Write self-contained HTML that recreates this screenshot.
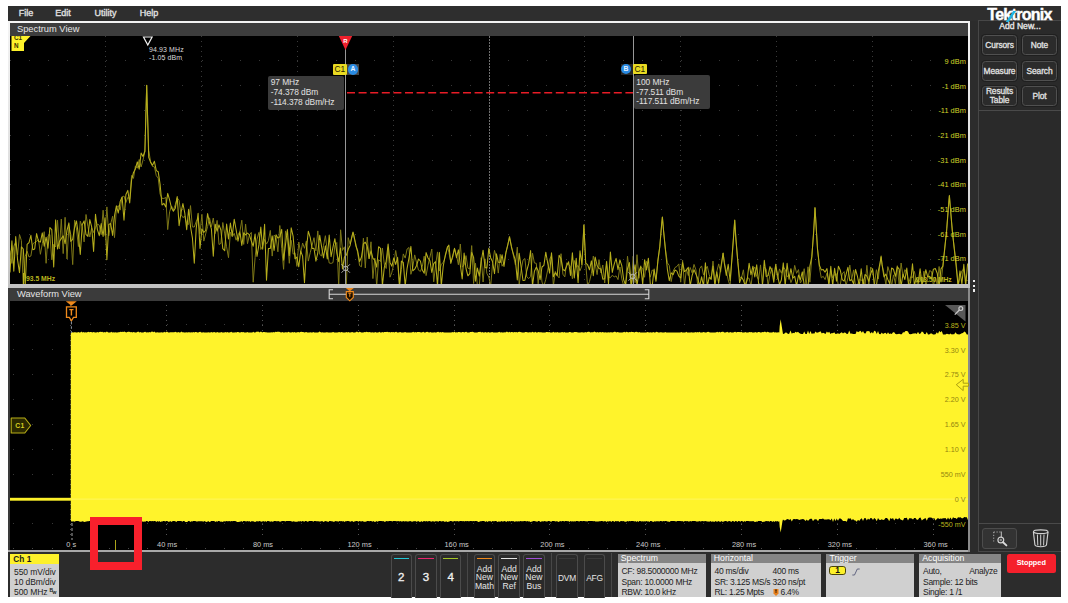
<!DOCTYPE html>
<html lang="en">
<head>
<meta charset="utf-8">
<title>Tektronix Spectrum View</title>
<style>
*{box-sizing:border-box;margin:0;padding:0}
html,body{width:1068px;height:603px;overflow:hidden;background:#fff}
body{font-family:"Liberation Sans",Arial,sans-serif;color:#eee;position:relative}
div,svg,b,i{position:absolute}
#app{left:8px;top:6px;width:1053px;height:591px;background:#2c2c2c;position:absolute}
/* coordinates inside #app are relative to (8,6) – we use a wrapper with offset to keep page coords */
#pg{left:-8px;top:-6px;width:1068px;height:603px}
#menubar{left:8px;top:6px;width:1053px;height:15px;background:#2e2e2e}
.menu{top:7.8px;width:40px;text-align:center;font-size:9px;font-weight:normal;-webkit-text-stroke:.35px #e0e0e0;color:#e0e0e0;letter-spacing:0;line-height:11px}
/* spectrum view */
#specframe{left:8px;top:21px;width:962.4px;height:266.5px;background:linear-gradient(#f4f4f4,#dcdcdc 60%,#c2c2c2)}
#spectitle{left:10px;top:22.5px;width:958.2px;height:13.5px;background:#3d3d3d}
.vtitle{font-size:9.3px;color:#e6e6e6;line-height:13px;left:7px;top:0;white-space:nowrap}
#specplot{left:10.3px;top:36px;width:957.9px;height:248px;background:#000;overflow:hidden}
/* waveform view */
#waveframe{left:8px;top:287.5px;width:962.4px;height:264.5px;background:#3a3a3a}
#wavetitle{left:8px;top:287.5px;width:962.4px;height:13.5px;background:#3b3b3b}
#waveplot{left:10.3px;top:301px;width:957.9px;height:250px;background:#000;overflow:hidden}
#wavebottom{left:8px;top:550.3px;width:962.4px;height:1.5px;background:#a9a9a9}
svg{left:0;top:0;overflow:visible}
/* side */
#sidepanel{left:978px;top:20px;width:83px;height:532px;background:#2a2a2a;border:1px solid #474747;border-right:0}
#logo{left:987.3px;top:5.7px;width:70px;height:18px;font-size:16px;font-weight:bold;color:#fff;letter-spacing:-.72px;line-height:18px;white-space:nowrap;z-index:3;-webkit-text-stroke:.45px #fff}
#logo span{position:static}
#logo .k{position:relative;display:inline-block}
#logo .k i{left:2.9px;top:5.4px;width:2.7px;height:10.6px;background:#1fb4e2;transform:skewX(-34deg);transform-origin:0 100%;display:block}
#addnew{left:979px;top:21px;width:82px;text-align:center;font-size:8.6px;font-weight:normal;-webkit-text-stroke:.35px #e6e6e6;color:#e6e6e6;line-height:11px;z-index:3}
.sbtn{width:35px;height:20px;border:1px solid #505050;border-radius:3.5px;background:#2b2b2b;color:#e2e2e2;font-size:8.4px;font-weight:normal;-webkit-text-stroke:.3px #e2e2e2;text-align:center;line-height:18px;letter-spacing:-.1px;white-space:nowrap;box-shadow:0 0 0 1px #1f1f1f}
.sbtn.two{line-height:8.4px;padding-top:.3px}
.hsep{height:1px;background:#4a4a4a}
#zoombtn{left:982px;top:528px;width:35px;height:20.5px;border:1px solid #4c4c4c;border-radius:3px;background:#333}
#trash{left:1032px;top:528.8px;width:18px;height:19px}
#handle{left:973px;top:279.8px;width:3px;height:14px}
#handle i{display:block;position:static;width:2.4px;height:2.4px;background:#ececec;margin:0 0 2.4px 0}
/* bottom */
.badge{top:553.5px;height:43.5px;background:#d0d0d0;color:#1c1c1c;overflow:hidden}
.badge .bh{left:0;top:0;right:0;height:9.5px;background:#858585;color:#fff;font-size:8.7px;line-height:8.6px;padding-left:3.3px;white-space:nowrap}
.badge .bt{left:4px;font-size:8.5px;line-height:10px;white-space:nowrap;letter-spacing:-.27px}
.cbtn{top:553.5px;width:21.5px;height:44px;border:1px solid #4b4b4b;border-bottom:0;border-radius:3px 3px 0 0;background:#2a2a2a}
.cbtn b{left:2px;right:2px;top:3.6px;height:1.2px;display:block}
.cbtn span{position:absolute}
.cbtn .num{left:0;right:0;top:15.5px;text-align:center;font-size:11.5px;line-height:14px;color:#f0f0f0;-webkit-text-stroke:.35px #f0f0f0}
.cbtn .t3{left:-3px;right:-3px;top:10.2px;text-align:center;font-size:8.6px;line-height:8.8px;color:#e6e6e6}
.cbtn .t1{left:-3px;right:-3px;top:18px;text-align:center;font-size:8.4px;line-height:10px;color:#e6e6e6;letter-spacing:-.2px}
.vsep{top:553px;width:1px;height:44px;background:#474747}
.pill{left:3.3px;top:12.8px;width:16.4px;height:9.2px;border-radius:2.8px;background:#fdf12a;border:.9px solid #4a4508;font-size:8.4px;line-height:7.6px;text-align:center;color:#111;font-weight:bold}
#stopped{left:1007px;top:553.8px;width:48.5px;height:19.3px;background:#f5202c;border-radius:2.5px;color:#fff;font-size:7.3px;font-weight:bold;text-align:center;line-height:17.6px}
/* overlay */
.tagt{font-size:6.3px;font-weight:bold;color:#3a3200;line-height:8px}
.pk{font-size:7px;color:#d8d8d8;line-height:8px;white-space:nowrap;letter-spacing:.1px}
.curline{width:1.3px;background:#989898}
#rlab{left:342px;top:37.5px;width:7px;text-align:center;font-size:6px;font-weight:bold;color:#fff;line-height:7px}
.c1tag{width:14px;height:10.8px;background:#e9da22;color:#262200;font-size:8.4px;line-height:10.5px;text-align:center;border-radius:1px}
.abbg{width:12px;height:10.8px;background:#454545}
.ab{width:10.4px;height:10.4px;border-radius:50%;background:#2a8be2;color:#e8f2ff;font-size:6.8px;font-weight:bold;text-align:center;line-height:10.5px}
.rd{height:34px;background:#3b3b3b;border-radius:2px;color:#e2e2e2;font-size:8.4px;line-height:9.9px;padding:2.6px 0 0 2.5px;white-space:nowrap;letter-spacing:-.05px}
.rd span{position:static;display:block}
.ylab{left:900px;width:65.8px;text-align:right;font-size:7.4px;line-height:9px;color:#d4d42a;white-space:nowrap}
.flab{font-size:6.8px;font-weight:bold;color:#b9b41e;line-height:8px;white-space:nowrap}
#c1m{left:13px;top:421px;width:14px;text-align:center;font-size:6.8px;font-weight:bold;color:#d9d022;line-height:9px;letter-spacing:.5px}
.vlab{left:900px;width:65.5px;text-align:right;font-size:7.2px;line-height:9px;color:#93850f;white-space:nowrap}
.tlab{top:540px;width:20px;text-align:center;font-size:7.4px;line-height:9px;color:#c9c9c9;white-space:nowrap}
#redbox{left:89.5px;top:517px;width:52.5px;height:53px;border:8px solid #f8202c}
</style>
</head>
<body>
<div id="app"><div id="pg">

<div id="menubar"></div>
<div class="menu" style="left:6.1px">File</div>
<div class="menu" style="left:42.9px">Edit</div>
<div class="menu" style="left:85.4px">Utility</div>
<div class="menu" style="left:129.1px">Help</div>

<!-- ================= Spectrum View ================= -->
<div id="specframe"></div>
<div id="spectitle"><div class="vtitle">Spectrum View</div></div>
<div id="specplot">
<svg width="958" height="248" viewBox="0 0 958 248">
<g shape-rendering="crispEdges">
<line x1="0" x2="925.0" y1="24.8" y2="24.8" stroke="#383838" stroke-width="1" stroke-dasharray="1 18.160"/>
<line x1="0" x2="925.0" y1="49.6" y2="49.6" stroke="#383838" stroke-width="1" stroke-dasharray="1 18.160"/>
<line x1="0" x2="925.0" y1="74.4" y2="74.4" stroke="#383838" stroke-width="1" stroke-dasharray="1 18.160"/>
<line x1="0" x2="925.0" y1="99.2" y2="99.2" stroke="#383838" stroke-width="1" stroke-dasharray="1 18.160"/>
<line x1="0" x2="925.0" y1="124.0" y2="124.0" stroke="#383838" stroke-width="1" stroke-dasharray="1 18.160"/>
<line x1="0" x2="925.0" y1="148.8" y2="148.8" stroke="#383838" stroke-width="1" stroke-dasharray="1 18.160"/>
<line x1="0" x2="925.0" y1="173.6" y2="173.6" stroke="#383838" stroke-width="1" stroke-dasharray="1 18.160"/>
<line x1="0" x2="925.0" y1="198.4" y2="198.4" stroke="#383838" stroke-width="1" stroke-dasharray="1 18.160"/>
<line x1="0" x2="925.0" y1="223.2" y2="223.2" stroke="#383838" stroke-width="1" stroke-dasharray="1 18.160"/>
<line y1="0" y2="248" x1="95.8" x2="95.8" stroke="#3a3a3a" stroke-width="1" stroke-dasharray="1 3.960"/>
<line y1="0" y2="248" x1="191.6" x2="191.6" stroke="#3a3a3a" stroke-width="1" stroke-dasharray="1 3.960"/>
<line y1="0" y2="248" x1="287.4" x2="287.4" stroke="#3a3a3a" stroke-width="1" stroke-dasharray="1 3.960"/>
<line y1="0" y2="248" x1="383.2" x2="383.2" stroke="#3a3a3a" stroke-width="1" stroke-dasharray="1 3.960"/>
<line y1="0" y2="248" x1="479.0" x2="479.0" stroke="#707070" stroke-width="1" stroke-dasharray="1.5 1.5"/>
<line y1="0" y2="248" x1="574.8" x2="574.8" stroke="#3a3a3a" stroke-width="1" stroke-dasharray="1 3.960"/>
<line y1="0" y2="248" x1="670.6" x2="670.6" stroke="#3a3a3a" stroke-width="1" stroke-dasharray="1 3.960"/>
<line y1="0" y2="248" x1="766.4" x2="766.4" stroke="#3a3a3a" stroke-width="1" stroke-dasharray="1 3.960"/>
<line y1="0" y2="248" x1="862.2" x2="862.2" stroke="#3a3a3a" stroke-width="1" stroke-dasharray="1 3.960"/>
</g>
<path d="M0.0 214.5 L1.9 227.4 L3.8 210.2 L5.7 206.1 L7.6 219.0 L9.5 198.5 L11.4 204.6 L13.3 250.0 L15.2 220.2 L17.1 215.2 L19.0 221.0 L20.9 220.0 L22.8 207.9 L24.7 206.4 L26.6 205.4 L28.5 203.5 L30.4 218.3 L32.3 207.8 L34.2 195.7 L36.1 227.3 L38.0 200.0 L39.9 198.6 L41.8 223.8 L43.7 208.3 L45.6 211.0 L47.5 184.1 L49.4 212.9 L51.3 183.0 L53.2 217.6 L55.1 181.3 L57.0 223.0 L58.9 190.6 L60.8 198.6 L62.7 228.6 L64.6 184.0 L66.5 193.0 L68.4 210.6 L70.3 185.2 L72.2 190.6 L74.1 205.9 L76.0 178.5 L77.9 190.4 L79.8 201.0 L81.7 191.7 L83.6 196.5 L85.5 191.4 L87.4 188.1 L89.3 189.2 L91.2 198.7 L93.1 174.2 L95.0 199.5 L96.9 170.9 L98.8 199.8 L100.7 187.8 L102.6 180.2 L104.5 201.6 L106.4 172.2 L108.3 169.6 L110.2 174.1 L112.1 161.0 L114.0 160.0 L115.9 166.5 L117.8 161.3 L119.7 163.0 L121.6 139.4 L123.5 142.4 L125.4 129.9 L127.3 132.2 L129.2 123.5 L131.1 131.0 L133.0 124.0 L134.9 115.6 L136.7 49.2 L138.7 114.2 L140.6 125.6 L142.5 130.5 L144.4 130.8 L146.3 139.7 L148.2 142.1 L150.1 158.1 L152.0 162.3 L153.9 162.5 L155.8 161.4 L157.7 193.6 L159.6 175.8 L161.5 169.9 L163.4 174.0 L165.3 168.6 L167.2 161.8 L169.1 164.6 L171.0 178.2 L172.9 181.6 L174.8 180.2 L176.7 187.7 L178.6 188.4 L180.5 169.6 L182.4 190.9 L184.3 191.0 L186.2 185.6 L188.1 181.9 L190.0 197.8 L191.9 178.3 L193.8 205.1 L195.7 197.8 L197.6 190.5 L199.5 181.8 L201.4 190.7 L203.3 182.0 L205.2 197.6 L207.1 184.4 L209.0 208.5 L210.9 207.4 L212.8 186.5 L214.7 197.9 L216.6 210.8 L218.5 221.7 L220.4 196.2 L222.3 201.0 L224.2 197.3 L226.1 204.2 L228.0 198.9 L229.9 195.5 L231.8 184.2 L233.7 208.4 L235.6 188.1 L237.5 207.7 L239.4 199.0 L241.3 196.4 L243.2 246.2 L245.1 221.6 L247.0 203.4 L248.9 196.4 L250.8 213.5 L252.7 209.8 L254.6 203.4 L256.5 208.1 L258.4 204.7 L260.3 194.4 L262.2 220.1 L264.1 199.2 L266.0 200.9 L267.9 215.8 L269.8 189.5 L271.7 212.3 L273.6 233.3 L275.5 194.9 L277.4 201.3 L279.3 227.3 L281.2 204.3 L283.1 218.2 L285.0 216.7 L286.9 230.4 L288.8 206.0 L290.7 217.3 L292.6 207.0 L294.5 212.3 L296.4 204.9 L298.3 225.1 L300.2 216.8 L302.1 209.3 L304.0 201.7 L305.9 214.8 L307.8 194.9 L309.7 218.4 L311.6 220.0 L313.5 209.7 L315.4 199.7 L317.3 215.1 L319.2 227.0 L321.1 227.4 L323.0 226.6 L324.9 209.5 L326.8 206.5 L328.7 250.0 L330.6 193.8 L332.5 214.4 L334.4 210.8 L336.3 250.0 L338.2 201.7 L340.1 208.0 L342.0 201.0 L343.0 196.5 L343.9 201.2 L345.8 207.5 L347.7 217.0 L349.6 229.6 L351.5 230.8 L353.4 202.2 L355.3 232.0 L357.2 201.1 L359.1 222.9 L361.0 205.8 L362.9 242.6 L364.8 222.1 L366.7 250.0 L368.6 223.7 L370.5 225.5 L372.4 212.0 L374.3 228.2 L376.2 232.5 L378.1 211.7 L380.0 241.2 L381.9 236.2 L383.8 227.9 L385.7 214.5 L387.6 225.7 L389.5 250.0 L391.4 233.5 L393.3 217.9 L395.2 222.1 L397.1 213.0 L399.0 211.5 L400.9 238.3 L402.8 231.1 L404.7 218.9 L406.6 226.8 L408.5 234.2 L410.4 235.4 L412.3 230.7 L414.2 220.2 L416.1 239.6 L418.0 229.2 L419.9 221.1 L421.8 213.0 L423.7 245.8 L425.6 229.2 L427.5 215.9 L429.4 235.0 L431.3 228.2 L433.2 226.5 L435.1 221.5 L437.5 210.3 L438.9 216.5 L440.8 226.4 L442.7 221.4 L444.5 212.4 L446.5 219.3 L448.4 228.8 L450.3 208.0 L452.2 231.2 L454.1 229.0 L456.0 219.6 L457.9 232.1 L459.8 233.0 L461.7 209.6 L463.6 247.5 L465.5 227.2 L467.4 250.0 L469.3 250.0 L471.2 221.7 L473.1 246.0 L475.0 222.8 L476.9 237.6 L478.8 241.0 L480.7 250.0 L482.6 227.5 L484.5 214.4 L486.4 221.5 L488.3 237.1 L490.2 218.3 L492.1 230.2 L494.0 226.6 L495.9 216.3 L497.8 208.9 L499.5 200.1 L501.6 210.8 L503.5 220.1 L505.4 228.8 L507.3 211.1 L509.2 248.5 L511.1 234.2 L513.0 224.2 L514.9 222.5 L516.8 240.8 L518.7 242.6 L520.6 240.6 L522.5 217.2 L524.4 227.0 L526.3 227.3 L528.2 247.8 L530.1 226.2 L532.0 246.1 L533.9 250.0 L535.8 243.3 L537.7 234.1 L539.6 223.3 L541.5 219.8 L543.4 250.0 L545.3 235.4 L547.2 239.4 L549.1 241.9 L551.0 217.7 L552.9 238.2 L554.8 240.9 L556.7 226.8 L558.6 228.3 L560.5 230.4 L562.4 242.8 L564.3 224.5 L566.2 231.1 L568.1 229.5 L570.0 234.8 L571.9 229.9 L573.9 188.5 L575.7 227.3 L577.6 250.0 L579.5 245.5 L581.4 237.4 L583.3 220.1 L585.2 227.8 L587.1 238.6 L589.0 223.6 L590.9 236.9 L592.8 229.0 L594.7 247.0 L596.6 228.3 L598.5 240.9 L600.4 241.7 L602.3 239.2 L604.2 240.9 L606.1 239.9 L608.0 243.6 L609.9 231.0 L611.8 242.9 L613.7 250.0 L615.6 248.8 L617.5 220.2 L619.4 237.1 L621.3 250.0 L623.2 220.2 L625.1 246.7 L627.0 218.7 L628.9 242.3 L630.8 231.2 L632.7 232.5 L634.6 241.3 L636.5 225.3 L638.4 232.5 L640.3 241.2 L642.2 234.0 L644.1 235.2 L646.0 243.2 L647.9 225.8 L649.8 210.5 L651.7 188.2 L652.4 180.9 L653.6 195.0 L655.5 213.6 L657.4 226.8 L659.3 229.6 L661.2 245.6 L663.1 235.3 L665.0 231.5 L666.9 230.5 L668.8 227.9 L670.7 246.2 L672.6 224.3 L674.5 250.0 L676.4 232.8 L678.3 239.6 L680.2 231.5 L682.1 236.8 L684.0 228.4 L685.9 233.8 L687.8 250.0 L689.7 232.6 L691.6 229.9 L693.5 238.9 L695.4 233.6 L697.3 230.3 L699.2 238.8 L701.1 243.4 L703.0 225.1 L704.9 245.8 L706.8 235.6 L708.7 227.9 L710.6 236.2 L713.1 217.1 L714.4 226.4 L716.3 235.6 L718.2 244.0 L720.1 250.0 L722.0 221.2 L723.9 197.0 L724.7 183.8 L725.8 199.9 L727.7 225.3 L729.6 240.9 L731.5 241.9 L733.4 233.8 L735.3 250.0 L737.2 242.0 L739.1 242.2 L741.0 250.0 L742.9 234.3 L744.8 231.0 L746.7 240.4 L748.6 243.6 L750.5 228.9 L752.4 249.3 L754.3 231.0 L756.2 233.1 L758.1 249.7 L760.0 238.4 L761.9 231.8 L763.8 242.9 L765.7 227.9 L767.6 243.3 L769.5 232.9 L771.4 237.2 L773.3 230.9 L775.2 233.4 L777.1 240.9 L779.0 238.7 L780.9 246.6 L782.8 242.0 L784.7 229.4 L786.6 237.3 L788.5 233.6 L790.4 247.0 L792.3 243.5 L794.2 232.7 L796.1 249.6 L798.0 230.8 L799.9 246.2 L801.8 221.5 L803.7 194.6 L805.0 171.4 L807.5 212.4 L809.4 231.6 L811.3 241.9 L813.2 240.3 L815.1 243.6 L817.0 237.0 L818.9 246.5 L820.8 234.4 L822.7 241.9 L824.6 238.5 L826.5 237.8 L828.4 250.0 L830.3 248.4 L832.2 237.9 L834.1 235.6 L836.0 250.0 L837.9 241.9 L839.8 229.1 L841.7 243.4 L843.6 233.9 L845.5 250.0 L847.4 250.0 L849.3 243.1 L851.2 244.4 L853.1 242.8 L855.0 250.0 L856.9 229.3 L858.8 250.0 L860.7 231.0 L862.6 233.7 L864.5 248.2 L866.4 233.7 L868.3 243.1 L870.2 226.2 L871.1 221.2 L872.1 229.0 L874.0 237.4 L875.9 248.7 L877.8 230.6 L879.7 236.8 L881.6 250.0 L883.5 238.9 L885.4 247.8 L887.3 229.7 L889.2 250.0 L891.1 227.0 L893.0 240.6 L894.9 233.6 L896.8 236.8 L898.7 247.1 L900.6 240.8 L902.5 241.5 L904.4 235.4 L906.3 245.0 L908.2 250.0 L910.1 238.4 L912.0 250.0 L913.9 235.2 L915.8 250.0 L917.7 242.5 L919.6 234.6 L921.5 235.5 L923.4 250.0 L925.3 241.1 L927.2 248.4 L929.1 230.5 L931.0 246.3 L932.9 230.1 L934.8 212.8 L936.7 192.3 L938.6 168.5 L939.4 159.9 L940.5 173.7 L942.4 195.8 L944.3 212.3 L946.2 226.4 L948.1 250.0 L950.0 241.2 L951.9 234.7 L953.8 233.1 L955.7 243.8 L957.6 244.6" fill="none" stroke="#7d7717" stroke-width="1" stroke-linejoin="round"/>
<path d="M0.0 236.4 L1.9 204.8 L3.8 235.3 L5.7 200.6 L7.6 224.0 L9.5 236.6 L11.4 210.8 L13.3 213.0 L15.2 250.0 L17.1 208.4 L19.0 206.6 L20.9 199.3 L22.8 213.7 L24.7 212.9 L26.6 197.6 L28.5 205.4 L30.4 206.1 L32.3 196.9 L34.2 210.3 L36.1 201.2 L38.0 212.3 L39.9 191.5 L41.8 193.6 L43.7 231.0 L45.6 183.9 L47.5 213.0 L49.4 205.5 L51.3 202.6 L53.2 199.9 L55.1 207.7 L57.0 194.3 L58.9 186.9 L60.8 205.5 L62.7 203.4 L64.6 191.5 L66.5 185.0 L68.4 198.7 L70.3 218.5 L72.2 188.7 L74.1 184.9 L76.0 198.5 L77.9 200.4 L79.8 183.6 L81.7 190.9 L83.6 215.5 L85.5 178.3 L87.4 193.6 L89.3 199.7 L91.2 187.6 L93.1 200.5 L95.0 181.8 L96.9 223.7 L98.8 188.4 L100.7 187.6 L102.6 199.5 L104.5 179.8 L106.4 169.8 L108.3 177.0 L110.2 165.4 L112.1 161.0 L114.0 184.3 L115.9 158.5 L117.8 154.4 L119.7 166.9 L121.6 143.9 L123.5 136.5 L125.4 133.0 L127.3 125.9 L129.2 133.1 L131.1 117.1 L133.0 120.5 L134.9 115.0 L136.7 49.2 L138.7 121.2 L140.6 126.4 L142.5 129.2 L144.4 125.3 L146.3 134.6 L148.2 135.7 L150.1 148.3 L152.0 169.0 L153.9 167.4 L155.8 171.0 L157.7 157.4 L159.6 163.9 L161.5 172.0 L163.4 175.3 L165.3 172.3 L167.2 160.6 L169.1 189.7 L171.0 176.9 L172.9 167.5 L174.8 177.2 L176.7 193.8 L178.6 173.3 L180.5 190.5 L182.4 201.8 L184.3 227.2 L186.2 192.6 L188.1 177.2 L190.0 212.5 L191.9 192.9 L193.8 196.4 L195.7 194.5 L197.6 177.6 L199.5 186.8 L201.4 192.8 L203.3 220.3 L205.2 188.2 L207.1 195.2 L209.0 188.9 L210.9 194.0 L212.8 212.6 L214.7 214.6 L216.6 188.0 L218.5 202.9 L220.4 187.0 L222.3 199.6 L224.2 183.2 L226.1 193.5 L228.0 205.1 L229.9 195.7 L231.8 209.4 L233.7 196.8 L235.6 198.9 L237.5 197.0 L239.4 198.9 L241.3 205.0 L243.2 210.2 L245.1 198.1 L247.0 220.4 L248.9 208.9 L250.8 191.1 L252.7 213.2 L254.6 188.3 L256.5 244.2 L258.4 212.6 L260.3 212.4 L262.2 199.9 L264.1 214.5 L266.0 198.7 L267.9 202.1 L269.8 200.9 L271.7 193.4 L273.6 224.3 L275.5 208.8 L277.4 193.5 L279.3 219.6 L281.2 191.8 L283.1 200.1 L285.0 222.8 L286.9 221.1 L288.8 230.8 L290.7 215.1 L292.6 220.1 L294.5 246.7 L296.4 213.2 L298.3 195.2 L300.2 201.4 L302.1 212.4 L304.0 212.3 L305.9 225.1 L307.8 216.8 L309.7 199.2 L311.6 210.6 L313.5 221.8 L315.4 209.8 L317.3 222.9 L319.2 199.0 L321.1 220.7 L323.0 211.0 L324.9 202.7 L326.8 216.8 L328.7 225.6 L330.6 212.1 L332.5 232.9 L334.4 221.1 L336.3 219.2 L338.2 213.3 L340.1 209.4 L342.0 199.8 L343.0 196.1 L343.9 199.1 L345.8 209.7 L347.7 215.0 L349.6 225.6 L351.5 221.0 L353.4 207.8 L355.3 206.2 L357.2 209.9 L359.1 222.4 L361.0 214.8 L362.9 222.3 L364.8 224.2 L366.7 231.1 L368.6 210.7 L370.5 212.3 L372.4 250.0 L374.3 231.3 L376.2 225.3 L378.1 208.1 L380.0 226.4 L381.9 230.2 L383.8 221.9 L385.7 228.4 L387.6 221.4 L389.5 250.0 L391.4 225.1 L393.3 226.5 L395.2 250.0 L397.1 232.3 L399.0 221.9 L400.9 210.4 L402.8 234.8 L404.7 233.2 L406.6 229.5 L408.5 223.0 L410.4 225.0 L412.3 234.0 L414.2 237.3 L416.1 216.6 L418.0 222.0 L419.9 224.7 L421.8 236.5 L423.7 227.7 L425.6 225.7 L427.5 250.0 L429.4 216.4 L431.3 250.0 L433.2 230.5 L435.1 220.0 L437.5 211.1 L438.9 209.1 L440.8 227.4 L442.7 219.8 L444.5 212.3 L446.5 221.7 L448.4 213.9 L450.3 228.7 L452.2 243.0 L454.1 217.1 L456.0 232.5 L457.9 239.8 L459.8 237.6 L461.7 216.4 L463.6 221.4 L465.5 245.1 L467.4 232.1 L469.3 240.1 L471.2 225.5 L473.1 214.2 L475.0 231.5 L476.9 232.0 L478.8 212.3 L480.7 221.9 L482.6 225.8 L484.5 237.6 L486.4 217.8 L488.3 226.2 L490.2 226.5 L492.1 218.8 L494.0 230.5 L495.9 216.9 L497.8 208.8 L499.5 201.3 L501.6 211.8 L503.5 218.4 L505.4 224.4 L507.3 243.9 L509.2 217.3 L511.1 230.9 L513.0 244.5 L514.9 244.2 L516.8 234.5 L518.7 227.7 L520.6 214.6 L522.5 249.9 L524.4 235.3 L526.3 231.1 L528.2 234.8 L530.1 243.7 L532.0 231.0 L533.9 229.3 L535.8 216.2 L537.7 227.2 L539.6 237.1 L541.5 216.7 L543.4 240.7 L545.3 236.8 L547.2 239.7 L549.1 219.3 L551.0 222.8 L552.9 233.5 L554.8 234.7 L556.7 229.9 L558.6 225.7 L560.5 239.4 L562.4 216.7 L564.3 241.9 L566.2 222.2 L568.1 246.8 L570.0 214.8 L571.9 228.6 L573.9 189.2 L575.7 227.1 L577.6 228.7 L579.5 233.8 L581.4 224.9 L583.3 239.8 L585.2 221.0 L587.1 229.5 L589.0 232.5 L590.9 233.1 L592.8 243.2 L594.7 242.8 L596.6 225.4 L598.5 247.6 L600.4 216.1 L602.3 236.4 L604.2 228.1 L606.1 222.4 L608.0 233.7 L609.9 223.9 L611.8 229.6 L613.7 243.9 L615.6 249.0 L617.5 232.6 L619.4 226.6 L621.3 250.0 L623.2 238.0 L625.1 228.9 L627.0 250.0 L628.9 235.6 L630.8 230.1 L632.7 248.4 L634.6 223.7 L636.5 233.9 L638.4 222.2 L640.3 248.0 L642.2 250.0 L644.1 233.1 L646.0 245.3 L647.9 224.1 L649.8 210.6 L651.7 187.6 L652.4 181.0 L653.6 195.3 L655.5 214.7 L657.4 233.3 L659.3 244.6 L661.2 236.9 L663.1 238.7 L665.0 234.0 L666.9 235.1 L668.8 240.1 L670.7 242.0 L672.6 226.6 L674.5 235.6 L676.4 234.2 L678.3 231.2 L680.2 250.0 L682.1 239.5 L684.0 233.7 L685.9 238.1 L687.8 242.8 L689.7 250.0 L691.6 240.8 L693.5 250.0 L695.4 226.8 L697.3 250.0 L699.2 241.3 L701.1 243.2 L703.0 230.2 L704.9 250.0 L706.8 235.7 L708.7 247.3 L710.6 232.5 L713.1 217.1 L714.4 228.0 L716.3 239.5 L718.2 228.3 L720.1 244.6 L722.0 222.0 L723.9 195.6 L724.7 184.2 L725.8 202.4 L727.7 223.9 L729.6 246.6 L731.5 241.0 L733.4 244.3 L735.3 250.0 L737.2 243.8 L739.1 227.2 L741.0 238.8 L742.9 230.2 L744.8 240.9 L746.7 228.8 L748.6 247.3 L750.5 250.0 L752.4 250.0 L754.3 224.3 L756.2 240.5 L758.1 239.6 L760.0 230.6 L761.9 235.0 L763.8 246.3 L765.7 228.8 L767.6 239.4 L769.5 248.8 L771.4 243.8 L773.3 226.9 L775.2 250.0 L777.1 227.3 L779.0 243.2 L780.9 232.7 L782.8 242.1 L784.7 240.4 L786.6 250.0 L788.5 239.0 L790.4 243.7 L792.3 235.9 L794.2 248.8 L796.1 250.0 L798.0 250.0 L799.9 229.8 L801.8 220.9 L803.7 195.8 L805.0 171.9 L807.5 213.3 L809.4 229.3 L811.3 233.9 L813.2 233.6 L815.1 236.1 L817.0 232.6 L818.9 249.7 L820.8 230.3 L822.7 249.8 L824.6 232.3 L826.5 245.1 L828.4 230.2 L830.3 234.3 L832.2 243.6 L834.1 245.2 L836.0 238.7 L837.9 231.3 L839.8 244.7 L841.7 243.5 L843.6 247.9 L845.5 233.5 L847.4 240.2 L849.3 250.0 L851.2 232.7 L853.1 250.0 L855.0 238.5 L856.9 240.1 L858.8 245.4 L860.7 237.8 L862.6 232.7 L864.5 250.0 L866.4 250.0 L868.3 235.2 L870.2 226.3 L871.1 220.1 L872.1 228.9 L874.0 241.0 L875.9 238.1 L877.8 243.4 L879.7 247.6 L881.6 232.0 L883.5 233.3 L885.4 240.3 L887.3 230.8 L889.2 233.2 L891.1 250.0 L893.0 238.2 L894.9 243.5 L896.8 232.1 L898.7 250.0 L900.6 246.3 L902.5 227.7 L904.4 249.3 L906.3 241.7 L908.2 246.8 L910.1 232.7 L912.0 247.7 L913.9 244.4 L915.8 233.7 L917.7 240.9 L919.6 240.2 L921.5 242.8 L923.4 233.2 L925.3 232.5 L927.2 237.2 L929.1 250.0 L931.0 232.9 L932.9 230.1 L934.8 211.4 L936.7 194.4 L938.6 168.9 L939.4 159.4 L940.5 173.2 L942.4 195.6 L944.3 213.3 L946.2 230.9 L948.1 250.0 L950.0 234.9 L951.9 248.3 L953.8 228.2 L955.7 250.0 L957.6 227.5" fill="none" stroke="#b5ad1c" stroke-width="1.05" stroke-linejoin="round"/>
</svg>
</div>

<!-- ================= Waveform View ================= -->
<div id="waveframe"></div>
<div id="wavetitle"><div class="vtitle" style="left:9px;top:.6px">Waveform View</div></div>
<div id="waveplot">
<svg width="958" height="250" viewBox="0 0 958 250">
<g shape-rendering="crispEdges">
<line x1="3.3" x2="925.0" y1="23.6" y2="23.6" stroke="#383838" stroke-width="1" stroke-dasharray="1 18.160"/>
<line x1="3.3" x2="925.0" y1="48.5" y2="48.5" stroke="#383838" stroke-width="1" stroke-dasharray="1 18.160"/>
<line x1="3.3" x2="925.0" y1="73.4" y2="73.4" stroke="#383838" stroke-width="1" stroke-dasharray="1 18.160"/>
<line x1="3.3" x2="925.0" y1="98.3" y2="98.3" stroke="#383838" stroke-width="1" stroke-dasharray="1 18.160"/>
<line x1="3.3" x2="925.0" y1="123.2" y2="123.2" stroke="#383838" stroke-width="1" stroke-dasharray="1 18.160"/>
<line x1="3.3" x2="925.0" y1="148.1" y2="148.1" stroke="#383838" stroke-width="1" stroke-dasharray="1 18.160"/>
<line x1="3.3" x2="925.0" y1="173.0" y2="173.0" stroke="#383838" stroke-width="1" stroke-dasharray="1 18.160"/>
<line x1="3.3" x2="925.0" y1="197.9" y2="197.9" stroke="#383838" stroke-width="1" stroke-dasharray="1 18.160"/>
<line x1="3.3" x2="925.0" y1="222.8" y2="222.8" stroke="#383838" stroke-width="1" stroke-dasharray="1 18.160"/>
<line y1="-1.3" y2="236" x1="60.8" x2="60.8" stroke="#555" stroke-width="1" stroke-dasharray="1 3.98"/>
<line y1="-1.3" y2="236" x1="156.6" x2="156.6" stroke="#555" stroke-width="1" stroke-dasharray="1 3.98"/>
<line y1="-1.3" y2="236" x1="252.4" x2="252.4" stroke="#555" stroke-width="1" stroke-dasharray="1 3.98"/>
<line y1="-1.3" y2="236" x1="348.2" x2="348.2" stroke="#555" stroke-width="1" stroke-dasharray="1 3.98"/>
<line y1="-1.3" y2="236" x1="444.0" x2="444.0" stroke="#555" stroke-width="1" stroke-dasharray="1 3.98"/>
<line y1="-1.3" y2="236" x1="539.8" x2="539.8" stroke="#555" stroke-width="1" stroke-dasharray="1 3.98"/>
<line y1="-1.3" y2="236" x1="635.6" x2="635.6" stroke="#555" stroke-width="1" stroke-dasharray="1 3.98"/>
<line y1="-1.3" y2="236" x1="731.4" x2="731.4" stroke="#555" stroke-width="1" stroke-dasharray="1 3.98"/>
<line y1="-1.3" y2="236" x1="827.2" x2="827.2" stroke="#555" stroke-width="1" stroke-dasharray="1 3.98"/>
<line y1="-1.3" y2="236" x1="923.0" x2="923.0" stroke="#555" stroke-width="1" stroke-dasharray="1 3.98"/>
<line x1="3.3" x2="958.0" y1="247.5" y2="247.5" stroke="#4a4a4a" stroke-width="1" stroke-dasharray="1 18.160"/>
</g>
<rect x="0" y="196.8" width="61.5" height="2.9" fill="#fdf12a"/>
<path d="M60.8 32.5 L61.3 31.5 L62.3 31.3 L63.3 31.5 L64.3 31.2 L65.3 31.2 L66.3 31.6 L67.3 31.6 L68.3 30.9 L69.3 31.5 L70.3 31.5 L71.3 30.6 L72.3 31.4 L73.3 30.9 L74.3 31.4 L75.3 31.2 L76.3 31.6 L77.3 31.2 L78.3 30.8 L79.3 31.3 L80.3 31.1 L81.3 31.1 L82.3 31.6 L83.3 31.0 L84.3 31.3 L85.3 31.5 L86.3 31.6 L87.3 30.9 L88.3 31.4 L89.3 31.1 L90.3 30.8 L91.3 31.1 L92.3 30.8 L93.3 31.4 L94.3 31.0 L95.3 31.4 L96.3 30.7 L97.3 30.8 L98.3 31.6 L99.3 31.6 L100.3 31.6 L101.3 30.7 L102.3 31.4 L103.3 31.2 L104.3 31.5 L105.3 31.3 L106.3 31.5 L107.3 31.5 L108.3 31.3 L109.3 31.3 L110.3 30.8 L111.3 31.1 L112.3 30.7 L113.3 30.9 L114.3 30.6 L115.3 31.1 L116.3 31.6 L117.3 30.9 L118.3 30.7 L119.3 30.8 L120.3 31.3 L121.3 31.1 L122.3 31.6 L123.3 30.9 L124.3 31.3 L125.3 31.5 L126.3 31.6 L127.3 30.9 L128.3 30.6 L129.3 31.6 L130.3 31.0 L131.3 31.4 L132.3 31.6 L133.3 31.5 L134.3 31.0 L135.3 30.8 L136.3 31.6 L137.3 31.2 L138.3 31.6 L139.3 31.1 L140.3 31.5 L141.3 30.8 L142.3 30.6 L143.3 31.3 L144.3 30.6 L145.3 31.5 L146.3 31.6 L147.3 31.2 L148.3 31.6 L149.3 31.6 L150.3 31.4 L151.3 31.2 L152.3 31.6 L153.3 31.6 L154.3 30.8 L155.3 31.5 L156.3 30.7 L157.3 30.8 L158.3 31.5 L159.3 31.4 L160.3 31.3 L161.3 31.2 L162.3 31.2 L163.3 31.3 L164.3 31.2 L165.3 30.7 L166.3 31.3 L167.3 31.4 L168.3 31.1 L169.3 31.5 L170.3 31.5 L171.3 30.6 L172.3 31.3 L173.3 31.3 L174.3 31.6 L175.3 31.4 L176.3 31.3 L177.3 31.6 L178.3 31.2 L179.3 31.2 L180.3 31.6 L181.3 31.2 L182.3 31.4 L183.3 31.1 L184.3 31.5 L185.3 31.1 L186.3 31.1 L187.3 31.6 L188.3 31.6 L189.3 31.1 L190.3 30.7 L191.3 31.5 L192.3 31.4 L193.3 31.2 L194.3 31.5 L195.3 31.5 L196.3 31.5 L197.3 31.5 L198.3 31.2 L199.3 31.5 L200.3 31.5 L201.3 31.0 L202.3 31.6 L203.3 31.3 L204.3 31.1 L205.3 31.5 L206.3 31.6 L207.3 31.0 L208.3 31.5 L209.3 31.6 L210.3 31.4 L211.3 31.1 L212.3 31.6 L213.3 31.5 L214.3 31.5 L215.3 30.9 L216.3 31.4 L217.3 30.9 L218.3 31.6 L219.3 31.5 L220.3 31.2 L221.3 30.8 L222.3 31.4 L223.3 31.5 L224.3 31.6 L225.3 31.3 L226.3 31.6 L227.3 30.9 L228.3 30.9 L229.3 31.6 L230.3 31.5 L231.3 30.9 L232.3 31.2 L233.3 30.9 L234.3 31.5 L235.3 31.6 L236.3 31.5 L237.3 31.0 L238.3 31.5 L239.3 31.5 L240.3 31.4 L241.3 31.4 L242.3 31.4 L243.3 30.8 L244.3 31.6 L245.3 31.6 L246.3 30.7 L247.3 30.8 L248.3 30.6 L249.3 31.4 L250.3 30.7 L251.3 30.7 L252.3 31.6 L253.3 31.0 L254.3 30.9 L255.3 31.2 L256.3 31.3 L257.3 31.5 L258.3 31.5 L259.3 31.5 L260.3 31.6 L261.3 31.3 L262.3 31.5 L263.3 30.9 L264.3 31.6 L265.3 30.8 L266.3 31.1 L267.3 30.7 L268.3 30.8 L269.3 30.8 L270.3 31.3 L271.3 31.6 L272.3 31.0 L273.3 31.6 L274.3 31.5 L275.3 31.2 L276.3 31.3 L277.3 31.4 L278.3 30.7 L279.3 31.2 L280.3 31.5 L281.3 31.5 L282.3 30.9 L283.3 31.4 L284.3 31.0 L285.3 31.5 L286.3 31.6 L287.3 31.3 L288.3 30.9 L289.3 31.6 L290.3 31.0 L291.3 30.8 L292.3 31.0 L293.3 30.9 L294.3 31.6 L295.3 31.2 L296.3 30.9 L297.3 31.6 L298.3 31.5 L299.3 31.5 L300.3 31.3 L301.3 31.4 L302.3 31.4 L303.3 31.0 L304.3 31.6 L305.3 31.6 L306.3 31.6 L307.3 31.6 L308.3 31.6 L309.3 30.6 L310.3 30.9 L311.3 31.6 L312.3 31.3 L313.3 31.5 L314.3 31.5 L315.3 31.5 L316.3 31.2 L317.3 31.3 L318.3 31.5 L319.3 31.6 L320.3 31.5 L321.3 31.6 L322.3 31.3 L323.3 31.1 L324.3 31.5 L325.3 31.6 L326.3 31.6 L327.3 31.5 L328.3 31.2 L329.3 31.0 L330.3 31.5 L331.3 31.0 L332.3 31.2 L333.3 31.4 L334.3 31.5 L335.3 31.4 L336.3 31.1 L337.3 31.4 L338.3 31.1 L339.3 31.4 L340.3 31.5 L341.3 31.3 L342.3 31.1 L343.3 31.6 L344.3 31.4 L345.3 31.4 L346.3 30.8 L347.3 30.7 L348.3 31.5 L349.3 30.8 L350.3 31.0 L351.3 31.5 L352.3 31.4 L353.3 31.6 L354.3 30.9 L355.3 31.2 L356.3 30.8 L357.3 31.0 L358.3 31.2 L359.3 31.1 L360.3 31.3 L361.3 31.6 L362.3 31.3 L363.3 31.6 L364.3 31.6 L365.3 31.0 L366.3 31.6 L367.3 31.6 L368.3 31.6 L369.3 30.8 L370.3 31.6 L371.3 31.6 L372.3 30.9 L373.3 31.6 L374.3 30.9 L375.3 31.1 L376.3 30.9 L377.3 30.7 L378.3 31.3 L379.3 31.0 L380.3 31.6 L381.3 31.0 L382.3 31.3 L383.3 31.1 L384.3 31.6 L385.3 31.0 L386.3 30.7 L387.3 31.6 L388.3 31.5 L389.3 31.3 L390.3 30.9 L391.3 31.5 L392.3 31.6 L393.3 31.5 L394.3 31.2 L395.3 31.0 L396.3 31.4 L397.3 31.5 L398.3 31.4 L399.3 31.5 L400.3 31.4 L401.3 31.6 L402.3 31.3 L403.3 30.7 L404.3 31.4 L405.3 31.0 L406.3 31.6 L407.3 31.1 L408.3 31.0 L409.3 31.1 L410.3 31.3 L411.3 31.4 L412.3 31.2 L413.3 30.8 L414.3 31.6 L415.3 31.6 L416.3 31.0 L417.3 30.8 L418.3 31.3 L419.3 31.4 L420.3 31.1 L421.3 31.6 L422.3 31.5 L423.3 31.6 L424.3 31.3 L425.3 31.5 L426.3 31.5 L427.3 31.1 L428.3 30.7 L429.3 31.5 L430.3 31.1 L431.3 31.4 L432.3 30.9 L433.3 31.3 L434.3 31.5 L435.3 31.6 L436.3 31.6 L437.3 31.4 L438.3 31.5 L439.3 31.6 L440.3 31.5 L441.3 31.5 L442.3 31.0 L443.3 31.6 L444.3 30.6 L445.3 31.4 L446.3 31.2 L447.3 31.4 L448.3 30.9 L449.3 30.9 L450.3 31.3 L451.3 31.4 L452.3 31.1 L453.3 30.9 L454.3 31.4 L455.3 31.1 L456.3 30.7 L457.3 31.4 L458.3 31.5 L459.3 31.5 L460.3 31.1 L461.3 31.1 L462.3 30.7 L463.3 30.9 L464.3 31.5 L465.3 31.6 L466.3 31.5 L467.3 31.6 L468.3 31.1 L469.3 30.9 L470.3 30.8 L471.3 31.5 L472.3 30.9 L473.3 31.5 L474.3 31.4 L475.3 31.1 L476.3 31.6 L477.3 31.6 L478.3 30.9 L479.3 31.5 L480.3 31.5 L481.3 31.3 L482.3 31.1 L483.3 31.6 L484.3 31.5 L485.3 31.4 L486.3 31.4 L487.3 31.6 L488.3 31.3 L489.3 30.7 L490.3 31.4 L491.3 31.3 L492.3 31.6 L493.3 31.5 L494.3 31.2 L495.3 31.6 L496.3 30.8 L497.3 30.8 L498.3 31.6 L499.3 30.7 L500.3 31.5 L501.3 31.0 L502.3 31.0 L503.3 31.5 L504.3 31.1 L505.3 31.2 L506.3 31.0 L507.3 31.5 L508.3 31.0 L509.3 30.7 L510.3 31.1 L511.3 31.3 L512.3 31.6 L513.3 31.4 L514.3 31.5 L515.3 31.1 L516.3 31.1 L517.3 31.3 L518.3 31.6 L519.3 31.2 L520.3 31.2 L521.3 31.6 L522.3 30.8 L523.3 31.2 L524.3 31.6 L525.3 30.7 L526.3 31.6 L527.3 31.5 L528.3 31.1 L529.3 31.2 L530.3 31.3 L531.3 31.2 L532.3 31.4 L533.3 31.5 L534.3 31.6 L535.3 31.6 L536.3 31.1 L537.3 31.0 L538.3 31.3 L539.3 31.1 L540.3 31.5 L541.3 31.5 L542.3 31.5 L543.3 30.8 L544.3 31.6 L545.3 31.3 L546.3 31.5 L547.3 31.0 L548.3 31.5 L549.3 31.5 L550.3 31.4 L551.3 31.3 L552.3 31.0 L553.3 31.5 L554.3 30.9 L555.3 31.6 L556.3 31.5 L557.3 31.6 L558.3 31.6 L559.3 31.0 L560.3 31.1 L561.3 31.6 L562.3 31.6 L563.3 31.4 L564.3 31.0 L565.3 30.9 L566.3 31.0 L567.3 31.2 L568.3 31.6 L569.3 31.4 L570.3 31.6 L571.3 31.3 L572.3 31.3 L573.3 31.6 L574.3 31.5 L575.3 31.0 L576.3 31.6 L577.3 31.0 L578.3 30.8 L579.3 30.7 L580.3 31.5 L581.3 31.3 L582.3 31.3 L583.3 31.2 L584.3 30.6 L585.3 31.1 L586.3 31.5 L587.3 30.9 L588.3 31.4 L589.3 31.2 L590.3 31.1 L591.3 31.6 L592.3 31.0 L593.3 31.2 L594.3 31.4 L595.3 31.3 L596.3 31.4 L597.3 31.6 L598.3 31.3 L599.3 31.6 L600.3 31.3 L601.3 31.2 L602.3 31.4 L603.3 31.3 L604.3 30.7 L605.3 30.8 L606.3 31.6 L607.3 31.0 L608.3 31.2 L609.3 31.6 L610.3 31.5 L611.3 31.5 L612.3 31.6 L613.3 31.3 L614.3 30.7 L615.3 31.5 L616.3 30.8 L617.3 31.1 L618.3 31.6 L619.3 30.9 L620.3 31.2 L621.3 30.7 L622.3 31.1 L623.3 31.1 L624.3 31.5 L625.3 30.9 L626.3 30.7 L627.3 30.9 L628.3 31.4 L629.3 31.0 L630.3 31.4 L631.3 31.6 L632.3 31.6 L633.3 31.6 L634.3 31.6 L635.3 31.6 L636.3 31.4 L637.3 31.1 L638.3 31.3 L639.3 31.4 L640.3 31.2 L641.3 31.5 L642.3 31.4 L643.3 31.0 L644.3 31.4 L645.3 31.6 L646.3 30.8 L647.3 31.1 L648.3 31.5 L649.3 31.5 L650.3 31.3 L651.3 31.2 L652.3 31.5 L653.3 31.6 L654.3 31.6 L655.3 31.0 L656.3 31.6 L657.3 31.4 L658.3 31.6 L659.3 31.6 L660.3 31.6 L661.3 31.4 L662.3 31.6 L663.3 31.6 L664.3 31.6 L665.3 31.6 L666.3 31.4 L667.3 31.6 L668.3 31.6 L669.3 31.4 L670.3 31.4 L671.3 31.1 L672.3 31.6 L673.3 31.4 L674.3 31.4 L675.3 31.6 L676.3 30.7 L677.3 31.6 L678.3 31.6 L679.3 31.4 L680.3 31.6 L681.3 31.2 L682.3 31.5 L683.3 31.6 L684.3 31.6 L685.3 31.1 L686.3 31.5 L687.3 31.0 L688.3 31.4 L689.3 30.7 L690.3 31.5 L691.3 31.5 L692.3 31.5 L693.3 30.9 L694.3 31.2 L695.3 31.5 L696.3 31.6 L697.3 31.1 L698.3 30.7 L699.3 31.2 L700.3 31.6 L701.3 31.6 L702.3 31.6 L703.3 31.6 L704.3 31.6 L705.3 31.6 L706.3 31.2 L707.3 30.8 L708.3 31.6 L709.3 30.7 L710.3 31.4 L711.3 31.0 L712.3 30.8 L713.3 30.7 L714.3 31.6 L715.3 31.5 L716.3 31.2 L717.3 30.7 L718.3 31.6 L719.3 31.5 L720.3 30.9 L721.3 31.6 L722.3 31.4 L723.3 31.5 L724.3 31.1 L725.3 30.7 L726.3 31.6 L727.3 31.1 L728.3 31.1 L729.3 30.9 L730.3 31.3 L731.3 30.7 L732.3 31.5 L733.3 31.4 L734.3 31.5 L735.3 31.0 L736.3 31.4 L737.3 31.5 L738.3 31.6 L739.3 31.1 L740.3 31.2 L741.3 31.1 L742.3 31.5 L743.3 31.4 L744.3 31.6 L745.3 31.1 L746.3 31.6 L747.3 31.4 L748.3 31.0 L749.3 31.1 L750.3 31.6 L751.3 31.5 L752.3 30.9 L753.3 31.2 L754.3 30.8 L755.3 30.8 L756.3 31.4 L757.3 30.8 L758.3 31.1 L759.3 31.5 L760.3 31.5 L761.3 31.6 L762.3 31.4 L763.3 30.7 L764.3 31.6 L765.3 31.3 L766.3 31.6 L767.3 31.6 L768.3 31.2 L769.3 31.5 L769.7 25.0 L770.7 18.3 L771.7 25.0 L772.5 30.0 L773.0 32.9 L774.2 32.8 L775.5 31.4 L776.8 31.7 L778.0 32.9 L779.2 32.7 L780.5 29.6 L781.8 32.8 L783.0 31.8 L784.2 32.3 L785.5 30.8 L786.8 31.6 L788.0 30.7 L789.2 31.9 L790.5 32.8 L791.8 32.9 L793.0 33.0 L794.2 30.5 L795.5 32.9 L796.8 33.0 L798.0 29.6 L799.2 32.9 L800.5 30.1 L801.8 33.0 L803.0 32.2 L804.2 32.8 L805.5 30.5 L806.8 31.7 L808.0 31.5 L809.2 30.9 L810.5 30.3 L811.8 32.6 L813.0 31.7 L814.2 32.3 L815.5 33.0 L816.8 30.6 L818.0 31.8 L819.2 30.7 L820.5 32.9 L821.8 32.0 L823.0 32.3 L824.2 31.2 L825.5 33.1 L826.8 32.7 L828.0 32.3 L829.2 33.1 L830.5 32.0 L831.8 31.2 L833.0 32.5 L834.2 31.6 L835.5 31.8 L836.8 33.0 L838.0 32.7 L839.2 29.6 L840.5 32.7 L841.8 32.5 L843.0 33.1 L844.2 33.0 L845.5 33.1 L846.8 30.1 L848.0 31.3 L849.2 30.4 L850.5 29.7 L851.8 31.8 L853.0 30.1 L854.2 32.2 L855.5 32.6 L856.8 30.0 L858.0 30.3 L859.2 30.0 L860.5 32.4 L861.8 31.1 L863.0 32.6 L864.2 29.7 L865.5 30.2 L866.8 32.9 L868.0 30.1 L869.2 33.1 L870.5 33.2 L871.8 31.4 L873.0 33.0 L874.2 32.3 L875.5 31.8 L876.8 33.3 L878.0 31.3 L879.2 33.0 L880.5 32.6 L881.8 32.9 L883.0 31.3 L884.2 31.3 L885.5 33.0 L886.8 33.3 L888.0 33.0 L889.2 32.7 L890.5 33.3 L891.8 33.3 L893.0 31.3 L894.2 31.6 L895.5 29.9 L896.8 29.9 L898.0 30.6 L899.2 32.9 L900.5 33.3 L901.8 33.0 L903.0 32.6 L904.2 32.4 L905.5 32.3 L906.8 32.9 L908.0 30.8 L909.2 33.1 L910.5 32.6 L911.8 30.6 L913.0 31.1 L914.2 33.1 L915.5 33.2 L916.8 31.1 L918.0 33.4 L919.2 33.4 L920.5 32.4 L921.8 32.4 L923.0 33.4 L924.2 33.5 L925.5 33.3 L926.8 31.3 L928.0 32.7 L929.2 30.0 L930.5 31.3 L931.8 30.0 L933.0 33.5 L934.2 33.4 L935.5 33.5 L936.8 32.8 L938.0 33.1 L939.2 33.5 L940.5 32.5 L941.8 33.5 L943.0 33.2 L944.2 33.3 L945.5 31.2 L946.8 32.9 L948.0 33.3 L949.2 33.6 L950.5 32.9 L951.8 32.2 L953.0 31.9 L954.2 30.6 L955.5 31.2 L956.8 33.4 L958.0 33.5 L958.0 219.3 L956.8 216.2 L955.5 216.2 L954.2 216.1 L953.0 217.3 L951.8 217.2 L950.5 216.2 L949.2 216.4 L948.0 216.3 L946.8 218.0 L945.5 216.9 L944.2 217.0 L943.0 216.2 L941.8 218.8 L940.5 216.5 L939.2 218.4 L938.0 216.4 L936.8 218.7 L935.5 217.1 L934.2 217.3 L933.0 217.2 L931.8 217.7 L930.5 217.6 L929.2 217.9 L928.0 217.1 L926.8 217.9 L925.5 219.6 L924.2 216.9 L923.0 217.7 L921.8 216.8 L920.5 216.5 L919.2 216.6 L918.0 217.1 L916.8 219.8 L915.5 217.1 L914.2 217.8 L913.0 218.4 L911.8 219.6 L910.5 216.5 L909.2 216.9 L908.0 218.7 L906.8 218.7 L905.5 217.0 L904.2 217.0 L903.0 218.4 L901.8 217.6 L900.5 217.2 L899.2 217.3 L898.0 219.6 L896.8 216.8 L895.5 216.9 L894.2 217.0 L893.0 219.4 L891.8 219.0 L890.5 218.6 L889.2 216.8 L888.0 218.4 L886.8 217.8 L885.5 217.5 L884.2 219.4 L883.0 216.9 L881.8 218.1 L880.5 217.0 L879.2 220.2 L878.0 217.9 L876.8 217.0 L875.5 216.9 L874.2 218.7 L873.0 219.0 L871.8 218.3 L870.5 218.9 L869.2 218.8 L868.0 217.1 L866.8 220.2 L865.5 217.9 L864.2 217.0 L863.0 218.9 L861.8 217.2 L860.5 217.1 L859.2 218.7 L858.0 217.4 L856.8 219.6 L855.5 217.1 L854.2 217.2 L853.0 220.0 L851.8 217.2 L850.5 218.2 L849.2 219.9 L848.0 218.8 L846.8 220.8 L845.5 219.5 L844.2 219.2 L843.0 218.0 L841.8 219.3 L840.5 217.3 L839.2 217.8 L838.0 217.3 L836.8 220.8 L835.5 220.1 L834.2 219.9 L833.0 219.9 L831.8 218.4 L830.5 217.4 L829.2 217.6 L828.0 219.7 L826.8 217.5 L825.5 220.1 L824.2 217.5 L823.0 220.9 L821.8 217.6 L820.5 219.3 L819.2 218.3 L818.0 218.3 L816.8 218.4 L815.5 218.4 L814.2 218.6 L813.0 217.6 L811.8 218.1 L810.5 218.1 L809.2 218.1 L808.0 220.2 L806.8 218.6 L805.5 218.2 L804.2 218.5 L803.0 220.3 L801.8 217.8 L800.5 217.8 L799.2 218.6 L798.0 219.9 L796.8 218.4 L795.5 219.9 L794.2 218.6 L793.0 218.1 L791.8 218.2 L790.5 218.4 L789.2 218.9 L788.0 218.2 L786.8 217.9 L785.5 218.3 L784.2 218.0 L783.0 218.3 L781.8 220.6 L780.5 217.9 L779.2 219.1 L778.0 218.0 L776.8 218.2 L775.5 219.2 L774.2 219.5 L773.0 218.4 L772.5 220.0 L771.7 225.0 L770.7 231.6 L769.7 226.0 L769.3 220.2 L768.3 220.8 L767.3 220.0 L766.3 220.4 L765.3 220.1 L764.3 220.9 L763.3 220.0 L762.3 220.9 L761.3 220.1 L760.3 220.1 L759.3 220.8 L758.3 220.0 L757.3 220.2 L756.3 220.0 L755.3 220.3 L754.3 220.8 L753.3 220.8 L752.3 220.9 L751.3 220.0 L750.3 220.0 L749.3 220.1 L748.3 220.0 L747.3 220.7 L746.3 220.6 L745.3 220.9 L744.3 220.7 L743.3 220.1 L742.3 220.3 L741.3 220.2 L740.3 220.3 L739.3 220.3 L738.3 220.0 L737.3 220.1 L736.3 220.1 L735.3 220.8 L734.3 220.1 L733.3 220.9 L732.3 220.0 L731.3 220.1 L730.3 220.8 L729.3 220.0 L728.3 220.1 L727.3 221.0 L726.3 220.1 L725.3 220.1 L724.3 220.9 L723.3 220.0 L722.3 220.1 L721.3 220.9 L720.3 220.2 L719.3 220.1 L718.3 220.2 L717.3 220.7 L716.3 220.0 L715.3 220.0 L714.3 220.2 L713.3 220.8 L712.3 220.7 L711.3 220.1 L710.3 220.9 L709.3 220.4 L708.3 220.0 L707.3 220.8 L706.3 220.6 L705.3 220.0 L704.3 221.0 L703.3 220.5 L702.3 220.6 L701.3 220.8 L700.3 220.0 L699.3 220.8 L698.3 220.5 L697.3 220.4 L696.3 220.2 L695.3 220.0 L694.3 220.2 L693.3 220.3 L692.3 220.1 L691.3 220.2 L690.3 220.6 L689.3 220.0 L688.3 220.5 L687.3 220.4 L686.3 220.4 L685.3 220.0 L684.3 220.1 L683.3 220.0 L682.3 220.1 L681.3 220.5 L680.3 220.1 L679.3 220.6 L678.3 220.5 L677.3 220.0 L676.3 220.2 L675.3 220.1 L674.3 220.3 L673.3 220.8 L672.3 220.1 L671.3 220.3 L670.3 220.0 L669.3 220.0 L668.3 220.0 L667.3 220.1 L666.3 220.4 L665.3 220.3 L664.3 220.1 L663.3 220.0 L662.3 220.1 L661.3 220.0 L660.3 220.2 L659.3 220.9 L658.3 220.6 L657.3 220.4 L656.3 220.1 L655.3 220.1 L654.3 220.2 L653.3 220.1 L652.3 220.5 L651.3 220.1 L650.3 220.0 L649.3 220.4 L648.3 220.2 L647.3 220.2 L646.3 220.3 L645.3 220.5 L644.3 220.2 L643.3 220.9 L642.3 220.5 L641.3 220.0 L640.3 220.0 L639.3 220.9 L638.3 220.3 L637.3 220.5 L636.3 220.0 L635.3 220.4 L634.3 220.3 L633.3 220.6 L632.3 220.3 L631.3 220.6 L630.3 220.0 L629.3 220.0 L628.3 220.9 L627.3 220.0 L626.3 220.9 L625.3 220.0 L624.3 220.4 L623.3 220.0 L622.3 220.1 L621.3 220.1 L620.3 220.2 L619.3 220.1 L618.3 220.5 L617.3 220.0 L616.3 220.8 L615.3 220.8 L614.3 220.5 L613.3 220.0 L612.3 220.2 L611.3 220.0 L610.3 220.2 L609.3 220.9 L608.3 220.1 L607.3 220.2 L606.3 220.2 L605.3 220.0 L604.3 221.0 L603.3 220.1 L602.3 220.0 L601.3 221.0 L600.3 220.0 L599.3 220.2 L598.3 220.4 L597.3 220.3 L596.3 220.9 L595.3 220.0 L594.3 220.3 L593.3 220.6 L592.3 220.0 L591.3 220.1 L590.3 220.2 L589.3 220.3 L588.3 220.5 L587.3 220.4 L586.3 220.4 L585.3 220.6 L584.3 220.1 L583.3 220.3 L582.3 220.0 L581.3 220.1 L580.3 220.0 L579.3 220.0 L578.3 220.1 L577.3 220.4 L576.3 220.3 L575.3 220.3 L574.3 220.1 L573.3 220.0 L572.3 220.2 L571.3 220.1 L570.3 220.1 L569.3 220.6 L568.3 220.2 L567.3 220.1 L566.3 220.1 L565.3 220.4 L564.3 220.2 L563.3 220.6 L562.3 220.2 L561.3 220.6 L560.3 220.0 L559.3 220.9 L558.3 220.1 L557.3 220.3 L556.3 220.0 L555.3 220.0 L554.3 220.5 L553.3 220.1 L552.3 220.0 L551.3 220.5 L550.3 220.1 L549.3 220.4 L548.3 221.0 L547.3 220.2 L546.3 220.2 L545.3 220.6 L544.3 220.0 L543.3 220.0 L542.3 220.0 L541.3 220.8 L540.3 220.4 L539.3 220.0 L538.3 220.0 L537.3 220.4 L536.3 220.4 L535.3 220.3 L534.3 220.0 L533.3 220.5 L532.3 220.2 L531.3 220.5 L530.3 221.0 L529.3 220.0 L528.3 220.0 L527.3 220.8 L526.3 220.6 L525.3 220.3 L524.3 220.0 L523.3 220.1 L522.3 220.5 L521.3 220.7 L520.3 220.9 L519.3 220.3 L518.3 220.6 L517.3 220.0 L516.3 220.4 L515.3 220.0 L514.3 220.0 L513.3 220.2 L512.3 220.3 L511.3 220.3 L510.3 220.1 L509.3 220.6 L508.3 220.2 L507.3 220.5 L506.3 220.3 L505.3 220.6 L504.3 220.8 L503.3 220.1 L502.3 220.3 L501.3 220.1 L500.3 220.4 L499.3 220.0 L498.3 220.6 L497.3 220.1 L496.3 220.9 L495.3 220.2 L494.3 220.1 L493.3 220.6 L492.3 220.5 L491.3 220.0 L490.3 220.8 L489.3 220.5 L488.3 220.6 L487.3 221.0 L486.3 220.0 L485.3 220.0 L484.3 220.3 L483.3 220.3 L482.3 220.0 L481.3 220.9 L480.3 220.1 L479.3 220.2 L478.3 220.2 L477.3 220.9 L476.3 220.0 L475.3 220.9 L474.3 220.1 L473.3 220.1 L472.3 220.0 L471.3 220.2 L470.3 220.3 L469.3 220.8 L468.3 220.9 L467.3 220.3 L466.3 220.0 L465.3 220.0 L464.3 220.3 L463.3 220.0 L462.3 220.2 L461.3 220.0 L460.3 220.0 L459.3 220.3 L458.3 220.2 L457.3 220.0 L456.3 220.2 L455.3 220.0 L454.3 220.5 L453.3 220.1 L452.3 220.3 L451.3 220.0 L450.3 220.1 L449.3 220.3 L448.3 220.5 L447.3 220.1 L446.3 220.3 L445.3 220.2 L444.3 220.1 L443.3 220.5 L442.3 220.5 L441.3 220.0 L440.3 220.1 L439.3 220.6 L438.3 220.7 L437.3 221.0 L436.3 220.3 L435.3 220.8 L434.3 220.8 L433.3 220.1 L432.3 220.3 L431.3 220.6 L430.3 220.0 L429.3 220.0 L428.3 220.7 L427.3 220.3 L426.3 220.2 L425.3 220.2 L424.3 220.7 L423.3 220.3 L422.3 220.2 L421.3 220.7 L420.3 220.3 L419.3 220.0 L418.3 220.3 L417.3 220.5 L416.3 220.1 L415.3 220.5 L414.3 220.0 L413.3 220.2 L412.3 221.0 L411.3 220.1 L410.3 221.0 L409.3 220.7 L408.3 220.0 L407.3 220.5 L406.3 220.8 L405.3 220.1 L404.3 220.3 L403.3 220.2 L402.3 220.7 L401.3 220.6 L400.3 220.0 L399.3 220.2 L398.3 220.4 L397.3 220.4 L396.3 220.3 L395.3 220.2 L394.3 220.6 L393.3 220.0 L392.3 220.4 L391.3 220.4 L390.3 220.0 L389.3 220.5 L388.3 220.1 L387.3 220.3 L386.3 220.2 L385.3 220.0 L384.3 220.0 L383.3 220.1 L382.3 220.5 L381.3 220.1 L380.3 220.1 L379.3 220.0 L378.3 220.2 L377.3 220.2 L376.3 220.0 L375.3 220.7 L374.3 220.7 L373.3 220.1 L372.3 220.2 L371.3 220.0 L370.3 220.0 L369.3 220.0 L368.3 220.2 L367.3 220.8 L366.3 220.0 L365.3 220.9 L364.3 220.7 L363.3 220.0 L362.3 220.8 L361.3 220.0 L360.3 220.1 L359.3 220.2 L358.3 220.0 L357.3 220.0 L356.3 220.5 L355.3 220.7 L354.3 220.8 L353.3 220.6 L352.3 220.1 L351.3 220.4 L350.3 220.3 L349.3 220.0 L348.3 220.8 L347.3 220.1 L346.3 220.0 L345.3 220.3 L344.3 220.4 L343.3 221.0 L342.3 220.1 L341.3 220.3 L340.3 220.7 L339.3 220.2 L338.3 220.1 L337.3 220.0 L336.3 220.3 L335.3 220.3 L334.3 220.9 L333.3 220.0 L332.3 220.4 L331.3 220.0 L330.3 220.2 L329.3 220.0 L328.3 220.8 L327.3 220.3 L326.3 220.2 L325.3 220.1 L324.3 220.7 L323.3 220.8 L322.3 220.2 L321.3 220.2 L320.3 220.0 L319.3 220.0 L318.3 221.0 L317.3 220.6 L316.3 220.2 L315.3 220.0 L314.3 220.5 L313.3 221.0 L312.3 220.0 L311.3 220.2 L310.3 220.4 L309.3 220.4 L308.3 220.2 L307.3 220.3 L306.3 220.2 L305.3 220.1 L304.3 220.0 L303.3 220.7 L302.3 220.0 L301.3 220.1 L300.3 220.0 L299.3 220.0 L298.3 220.4 L297.3 220.7 L296.3 220.0 L295.3 220.1 L294.3 220.8 L293.3 220.2 L292.3 220.1 L291.3 220.8 L290.3 220.0 L289.3 220.5 L288.3 220.2 L287.3 220.8 L286.3 220.7 L285.3 220.7 L284.3 220.5 L283.3 220.3 L282.3 220.8 L281.3 220.3 L280.3 220.0 L279.3 220.1 L278.3 220.1 L277.3 220.0 L276.3 220.0 L275.3 220.4 L274.3 220.1 L273.3 220.0 L272.3 220.0 L271.3 220.3 L270.3 220.8 L269.3 220.4 L268.3 220.1 L267.3 220.2 L266.3 220.3 L265.3 220.1 L264.3 220.1 L263.3 220.5 L262.3 220.8 L261.3 220.2 L260.3 220.8 L259.3 220.3 L258.3 220.0 L257.3 220.1 L256.3 221.0 L255.3 220.1 L254.3 220.7 L253.3 220.0 L252.3 220.6 L251.3 220.7 L250.3 220.2 L249.3 220.0 L248.3 220.4 L247.3 220.2 L246.3 220.3 L245.3 221.0 L244.3 220.8 L243.3 220.3 L242.3 220.2 L241.3 220.2 L240.3 220.9 L239.3 220.1 L238.3 220.4 L237.3 220.1 L236.3 220.5 L235.3 220.3 L234.3 220.0 L233.3 220.1 L232.3 221.0 L231.3 220.1 L230.3 220.7 L229.3 220.7 L228.3 220.9 L227.3 221.0 L226.3 220.4 L225.3 220.1 L224.3 220.1 L223.3 220.1 L222.3 220.3 L221.3 220.1 L220.3 220.4 L219.3 220.0 L218.3 220.2 L217.3 220.3 L216.3 220.0 L215.3 220.6 L214.3 220.3 L213.3 220.5 L212.3 221.0 L211.3 220.6 L210.3 220.8 L209.3 220.0 L208.3 220.0 L207.3 220.8 L206.3 220.2 L205.3 221.0 L204.3 220.0 L203.3 220.0 L202.3 220.1 L201.3 220.0 L200.3 220.7 L199.3 220.9 L198.3 220.0 L197.3 220.7 L196.3 220.9 L195.3 220.4 L194.3 220.0 L193.3 220.7 L192.3 220.3 L191.3 220.2 L190.3 220.3 L189.3 220.2 L188.3 220.3 L187.3 220.6 L186.3 220.6 L185.3 220.1 L184.3 220.0 L183.3 220.1 L182.3 220.5 L181.3 220.2 L180.3 220.9 L179.3 220.1 L178.3 220.1 L177.3 221.0 L176.3 221.0 L175.3 220.9 L174.3 220.0 L173.3 220.0 L172.3 220.8 L171.3 220.1 L170.3 220.0 L169.3 220.0 L168.3 220.0 L167.3 220.1 L166.3 221.0 L165.3 220.2 L164.3 220.0 L163.3 220.1 L162.3 220.3 L161.3 220.9 L160.3 220.0 L159.3 220.8 L158.3 220.7 L157.3 220.0 L156.3 220.0 L155.3 220.6 L154.3 220.0 L153.3 220.0 L152.3 220.4 L151.3 220.5 L150.3 221.0 L149.3 220.0 L148.3 220.8 L147.3 220.0 L146.3 220.9 L145.3 220.1 L144.3 220.0 L143.3 220.3 L142.3 220.1 L141.3 220.2 L140.3 220.1 L139.3 220.0 L138.3 220.9 L137.3 220.1 L136.3 220.0 L135.3 220.7 L134.3 220.4 L133.3 220.7 L132.3 220.6 L131.3 220.3 L130.3 220.0 L129.3 220.0 L128.3 220.1 L127.3 220.0 L126.3 221.0 L125.3 220.1 L124.3 220.0 L123.3 220.1 L122.3 220.2 L121.3 220.1 L120.3 220.9 L119.3 220.9 L118.3 220.1 L117.3 220.1 L116.3 220.7 L115.3 220.1 L114.3 220.0 L113.3 220.8 L112.3 220.0 L111.3 220.4 L110.3 220.9 L109.3 220.8 L108.3 220.3 L107.3 220.1 L106.3 220.4 L105.3 220.0 L104.3 220.8 L103.3 220.5 L102.3 220.1 L101.3 220.2 L100.3 220.3 L99.3 220.3 L98.3 220.0 L97.3 220.4 L96.3 220.9 L95.3 220.7 L94.3 220.7 L93.3 220.2 L92.3 220.3 L91.3 220.1 L90.3 220.0 L89.3 220.9 L88.3 220.2 L87.3 220.6 L86.3 220.2 L85.3 220.1 L84.3 220.2 L83.3 220.3 L82.3 221.0 L81.3 220.5 L80.3 220.0 L79.3 220.0 L78.3 220.3 L77.3 220.2 L76.3 220.4 L75.3 220.7 L74.3 220.9 L73.3 220.4 L72.3 220.2 L71.3 220.8 L70.3 220.8 L69.3 220.4 L68.3 220.0 L67.3 220.0 L66.3 220.1 L65.3 220.3 L64.3 220.7 L63.3 220.3 L62.3 220.6 L61.3 220.6 L60.8 219.0Z" fill="#fff32b"/>
<rect x="61" y="197.6" width="897" height="1" fill="#fff978" opacity=".7"/>
</svg>
</div>
<div id="wavebottom"></div>
<div style="left:968.3px;top:287.5px;width:1.8px;height:264px;background:#8a8a8a"></div>

<!-- ================= Side panel ================= -->
<div id="logo"><span>Te</span><span class="k">k<i></i></span><span>tronix</span></div>
<div id="sidepanel"></div>
<div id="addnew">Add New...</div>
<div class="sbtn" style="left:982px;top:35px">Cursors</div>
<div class="sbtn" style="left:1022px;top:35px">Note</div>
<div class="sbtn" style="left:982px;top:60.5px">Measure</div>
<div class="sbtn" style="left:1022px;top:60.5px">Search</div>
<div class="sbtn two" style="left:982px;top:86px">Results<br>Table</div>
<div class="sbtn" style="left:1022px;top:86px">Plot</div>
<div class="hsep" style="left:979px;top:109.5px;width:82px"></div>
<div class="hsep" style="left:979px;top:522.5px;width:82px"></div>
<div id="zoombtn">
<svg width="34" height="20" viewBox="0 0 34 20">
<g stroke="#a8a8a8" stroke-width="1" fill="none">
<path d="M10.7 3v9.5M10.7 3h7" stroke-dasharray="1.2 1.6"/>
<path d="M18.3 2.5v5.5" stroke="#c4c4c4"/>
<circle cx="17.8" cy="11" r="2.9" stroke="#d0d0d0" stroke-width="1.2"/>
<circle cx="17.8" cy="11" r="1.3" fill="#8a8a8a" stroke="none"/>
<path d="M20 13.2l3.4 3.2" stroke="#dadada" stroke-width="1.9" stroke-linecap="round"/>
</g>
</svg>
</div>
<div id="trash">
<svg width="18" height="19" viewBox="0 0 18 19">
<g fill="none" stroke="#d2d2d2" stroke-width="1.15" stroke-linejoin="round">
<ellipse cx="8.7" cy="2.7" rx="7.3" ry="1.9"/>
<path d="M1.4 3l1.5 12.8c.1 1.3 1.8 1.9 5.8 1.9s5.7-.6 5.8-1.9L16 3"/>
<path d="M5.4 5.5l.4 10.9M8.7 5.7v11M12 5.5l-.4 10.9" stroke-width="1"/>
</g>
</svg>
</div>
<div id="handle"><i></i><i></i><i></i></div>

<!-- ================= Bottom bar ================= -->
<div class="badge" style="left:10px;width:49px"><div class="bh" style="background:#fdf12a;color:#1a1a1a;height:10.5px;line-height:10px;font-size:8.3px;font-weight:bold">Ch 1</div>
<div class="bt" style="top:13.2px;letter-spacing:-.08px">550 mV/div</div><div class="bt" style="top:23.4px;letter-spacing:-.08px">10 dBm/div</div><div class="bt" style="top:33.6px;letter-spacing:-.08px">500 MHz</div>
<div class="bt" style="left:39.5px;top:33px;font-size:5px;font-weight:bold;line-height:6px">B</div><div class="bt" style="left:42.6px;top:35.6px;font-size:5px;font-weight:bold;line-height:6px">w</div></div>

<div class="cbtn" style="left:390.5px"><b style="background:#22c7d6"></b><span class="num">2</span></div>
<div class="cbtn" style="left:415.2px"><b style="background:#e8266e"></b><span class="num">3</span></div>
<div class="cbtn" style="left:439.9px"><b style="background:#a4c626"></b><span class="num">4</span></div>
<div class="vsep" style="left:467px"></div>
<div class="cbtn" style="left:473.7px"><b style="background:#f08a1c"></b><span class="t3">Add<br>New<br>Math</span></div>
<div class="cbtn" style="left:498.4px"><b style="background:#e4e4e4"></b><span class="t3">Add<br>New<br>Ref</span></div>
<div class="cbtn" style="left:523.1px"><b style="background:#a04fd8"></b><span class="t3">Add<br>New<br>Bus</span></div>
<div class="vsep" style="left:550.5px"></div>
<div class="cbtn" style="left:556.2px"><b style="background:#3a3a3a"></b><span class="t1">DVM</span></div>
<div class="cbtn" style="left:583.8px"><b style="background:#3a3a3a"></b><span class="t1">AFG</span></div>
<div class="vsep" style="left:611px"></div>

<div class="badge" style="left:617.5px;width:88px"><div class="bh">Spectrum</div>
<div class="bt" style="top:12.8px">CF: 98.5000000 MHz</div><div class="bt" style="top:23px">Span: 10.0000 MHz</div><div class="bt" style="top:33.2px">RBW: 10.0 kHz</div></div>

<div class="badge" style="left:710.5px;width:110px"><div class="bh">Horizontal</div>
<div class="bt" style="top:12.8px">40 ms/div</div><div class="bt" style="top:12.8px;left:62px">400 ms</div>
<div class="bt" style="top:23px">SR: 3.125 MS/s</div><div class="bt" style="top:23px;left:62px">320 ns/pt</div>
<div class="bt" style="top:33.2px">RL: 1.25 Mpts</div><div class="bt" style="top:33.2px;left:70px">6.4%</div>
<svg style="left:62.5px;top:35px" width="6" height="7" viewBox="0 0 6 7"><path d="M.5 0h5v4.5L3 7 .5 4.5z" fill="#e8801c"/><path d="M2 1h2M3 1v3" stroke="#402000" stroke-width=".9" fill="none"/></svg>
</div>

<div class="badge" style="left:826.2px;width:87.6px"><div class="bh">Trigger</div>
<div class="pill">1</div>
<svg style="left:25.5px;top:14px" width="8" height="8" viewBox="0 0 8 8"><path d="M.3 7h2.2L5.3 1h2.400" fill="none" stroke="#565a78" stroke-width=".9"/></svg>
</div>

<div class="badge" style="left:919px;width:82px"><div class="bh">Acquisition</div>
<div class="bt" style="top:12.8px">Auto,</div><div class="bt" style="top:12.8px;left:auto;right:3.5px">Analyze</div>
<div class="bt" style="top:23px">Sample: 12 bits</div><div class="bt" style="top:33.2px">Single: 1 /1</div></div>

<div id="stopped">Stopped</div>

<!-- ================= Overlays ================= -->
<!-- C1 / N corner tag -->
<svg style="left:10.5px;top:36px" width="20" height="16" viewBox="0 0 20 16"><path d="M.5 0H19.5L13 6.9V15H.5z" fill="#fdf12a"/></svg>
<div style="left:10.5px;top:36px;width:20px;height:15px;overflow:hidden"><div class="tagt" style="left:3.4px;top:-1.8px">C1</div><div class="tagt" style="left:3.6px;top:5.6px">N</div></div>

<!-- peak marker -->
<svg style="left:142px;top:36px" width="12" height="11" viewBox="0 0 12 11"><path d="M1.5 1h8.6L5.8 9z" fill="#000" stroke="#f2f2f2" stroke-width="1.2" stroke-linejoin="miter"/></svg>
<div class="pk" style="left:149px;top:46.3px">94.93 MHz</div>
<div class="pk" style="left:149px;top:54.2px">-1.05 dBm</div>

<!-- cursors -->
<div class="curline" style="left:345px;top:48px;height:236px"></div>
<div class="curline" style="left:632.5px;top:36px;height:248px"></div>
<svg style="left:338px;top:36px" width="16" height="15" viewBox="0 0 16 15"><path d="M.8 0h13.4L7.5 14z" fill="#f0202c"/></svg>
<div id="rlab">R</div>
<svg style="left:346.5px;top:92px" width="286" height="2" viewBox="0 0 286 2"><line x1="0" x2="286" y1=".8" y2=".8" stroke="#e81c26" stroke-width="1.5" stroke-dasharray="8 3.6"/></svg>

<div class="c1tag" style="left:332.8px;top:64px">C1</div>
<div class="abbg" style="left:346.8px;top:64px"></div>
<div class="ab" style="left:347.8px;top:64.2px">A</div>
<div class="abbg" style="left:620.5px;top:63.8px;background:#262626"></div>
<div class="ab" style="left:620.8px;top:63.8px">B</div>
<div class="c1tag" style="left:632.8px;top:63.7px">C1</div>

<div class="rd" style="left:268.2px;top:75.5px;width:75.8px"><span>97 MHz</span><span>-74.378 dBm</span><span>-114.378 dBm/Hz</span></div>
<div class="rd" style="left:633.8px;top:75px;width:76px"><span>100 MHz</span><span>-77.511 dBm</span><span>-117.511 dBm/Hz</span></div>

<!-- cursor hit points -->
<svg style="left:340px;top:263px" width="12" height="12" viewBox="0 0 12 12"><g stroke="#bdbdbd" stroke-width=".9" fill="none"><circle cx="5.7" cy="5.5" r="2.2"/><path d="M1.5 1.3l2.5 2.5M9.9 1.3L7.4 3.8M1.5 9.7L4 7.2M9.9 9.7L7.4 7.2"/></g></svg>
<svg style="left:627px;top:270.5px" width="12" height="12" viewBox="0 0 12 12"><g stroke="#bdbdbd" stroke-width=".9" fill="none"><circle cx="5.7" cy="5.5" r="2.2"/><path d="M1.5 1.3l2.5 2.5M9.9 1.3L7.4 3.8M1.5 9.7L4 7.2M9.9 9.7L7.4 7.2"/></g></svg>

<!-- spectrum axis labels -->
<div class="ylab" style="top:56.8px">9 dBm</div>
<div class="ylab" style="top:81.5px">-1 dBm</div>
<div class="ylab" style="top:106.2px">-11 dBm</div>
<div class="ylab" style="top:130.9px">-21 dBm</div>
<div class="ylab" style="top:155.6px">-31 dBm</div>
<div class="ylab" style="top:180.3px">-41 dBm</div>
<div class="ylab" style="top:205px">-51 dBm</div>
<div class="ylab" style="top:229.7px">-61 dBm</div>
<div class="ylab" style="top:254.4px">-71 dBm</div>
<div style="left:23px;top:272.5px;width:1.2px;height:11.5px;background:#b9b41e"></div>
<div class="flab" style="left:26px;top:275px">93.5 MHz</div>
<div class="flab" style="left:916px;top:276px;letter-spacing:-.1px">103.50 MHz</div>

<!-- waveform title bracket -->
<svg style="left:328px;top:287px" width="322" height="15" viewBox="0 0 322 15">
<g fill="none" stroke="#d6d6d6" stroke-width="1.1"><path d="M5 2.7H1.2V11.8H5M1.2 7.3H320.8M316.8 2.7H320.8V11.8H316.8"/></g>
<path d="M17.8 1h8l-4 3.2z" fill="#f08a1c"/>
<path d="M18.3 4.6h7v5.8l-3.5 3.4-3.5-3.4z" fill="#1a0e00" stroke="#f08a1c" stroke-width="1.1"/>
<path d="M20.3 6.2h3M21.8 6.2v3.6" stroke="#f08a1c" stroke-width="1" fill="none"/>
</svg>

<!-- trigger T marker -->
<svg style="left:64px;top:301px" width="15" height="34" viewBox="0 0 15 34">
<path d="M1.8 .3h11l-5.5 4.5z" fill="#f08a1c"/>
<path d="M2.5 5.8h9.8v10.6h-2.8l-2.1 3.4-2.1-3.4H2.5z" fill="#000" stroke="#f08a1c" stroke-width="1.3"/>
<path d="M5.3 8.6h4.2M7.4 8.6v5.8" stroke="#f08a1c" stroke-width="1.4" fill="none"/>
<path d="M7.4 20.5V32" stroke="#8e98a4" stroke-width="1" stroke-dasharray="2.5 2.3" fill="none"/>
</svg>
<svg style="left:70.5px;top:521px" width="2" height="20" viewBox="0 0 2 20"><path d="M1 2V19" stroke="#a4a4a4" stroke-width="1" stroke-dasharray="3 2" fill="none"/></svg>

<!-- C1 ground marker -->
<svg style="left:10px;top:417px" width="23" height="17" viewBox="0 0 23 17"><path d="M1.2 1h13.6L20.7 8.5l-5.9 7.5H1.2z" fill="#2b2900" stroke="#b7ad16" stroke-width="1.1" stroke-linejoin="round"/></svg>
<div id="c1m">C1</div>

<!-- waveform axis labels -->
<div class="vlab" style="top:320.6px;color:#bcb61c">3.85 V</div>
<div class="vlab" style="top:345.5px">3.30 V</div>
<div class="vlab" style="top:370.4px">2.75 V</div>
<div class="vlab" style="top:395.3px">2.20 V</div>
<div class="vlab" style="top:420.2px">1.65 V</div>
<div class="vlab" style="top:445.1px">1.10 V</div>
<div class="vlab" style="top:470px">550 mV</div>
<div class="vlab" style="top:494.9px">0 V</div>
<div class="vlab" style="top:519.8px;color:#bcb61c">-550 mV</div>
<svg style="left:945px;top:304.5px" width="21" height="17" viewBox="0 0 21 17"><path d="M0 0h20.5v16.5z" fill="#585858"/><g stroke="#c9c9c9" fill="none"><circle cx="15.8" cy="3.6" r="1.9" stroke-width="1.2"/><path d="M14.4 5l-4.6 4.6" stroke-width="1.3"/></g></svg>
<svg style="left:955px;top:378px" width="14" height="14" viewBox="0 0 14 14"><path d="M1.3 6.7L8.2 1.3V5.2H13.5V8.2H8.2V12.6z" fill="#fff32b" stroke="#a0940f" stroke-width=".9" stroke-linejoin="round"/></svg>

<!-- time labels -->
<div class="tlab" style="left:61.3px">0 s</div>
<div class="tlab" style="left:157.1px">40 ms</div>
<div class="tlab" style="left:252.9px">80 ms</div>
<div class="tlab" style="left:347.4px">120 ms</div>
<div class="tlab" style="left:444.5px">160 ms</div>
<div class="tlab" style="left:540.3px">200 ms</div>
<div class="tlab" style="left:636.1px">240 ms</div>
<div class="tlab" style="left:731.9px">280 ms</div>
<div class="tlab" style="left:827.7px">320 ms</div>
<div class="tlab" style="left:923.5px">360 ms</div>
<div style="left:114.6px;top:539.5px;width:1.2px;height:10.5px;background:#aca41a"></div>

<!-- red annotation box -->
<div id="redbox"></div>

</div></div>
</body>
</html>
